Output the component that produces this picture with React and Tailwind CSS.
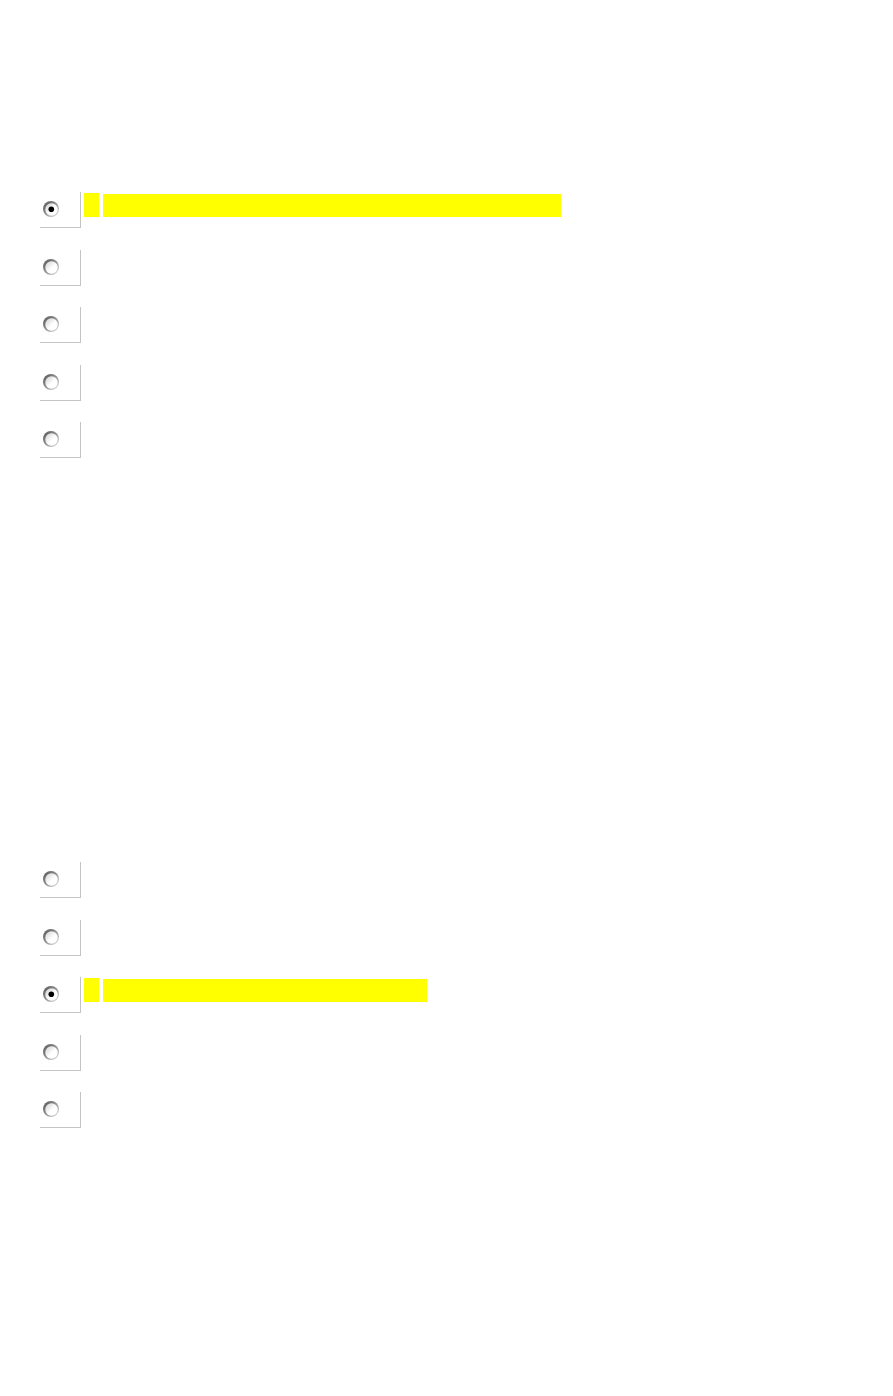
const groups = [
  { rows: [true, false, false, false, false], bar: 458 },
  { rows: [false, false, true, false, false], bar: 324 },
];

function Radio({ checked }) {
  return (
    <svg width="18" height="18" viewBox="0 0 18 18" className="block">
      <defs>
        <linearGradient id="ring" x1="0" y1="0" x2="1" y2="1">
          <stop offset="0" stopColor="#505050" />
          <stop offset="0.45" stopColor="#8c8c8c" />
          <stop offset="1" stopColor="#e6e6e6" />
        </linearGradient>
        <linearGradient id="inner" x1="0" y1="0" x2="1" y2="1">
          <stop offset="0" stopColor="#d0d0d0" />
          <stop offset="0.55" stopColor="#ffffff" />
        </linearGradient>
      </defs>
      <circle cx="9" cy="9" r="8" fill="url(#ring)" />
      <circle cx="9.5" cy="9.5" r="6.2" fill="url(#inner)" />
      {checked && <circle cx="9.3" cy="9.3" r="2.8" fill="#000" />}
    </svg>
  );
}

function Row({ checked, bar, last }) {
  return (
    <div className={`flex items-start ${last ? "" : "mb-[21.5px]"}`}>
      <div className="w-[41px] h-[36px] border-r border-b border-[#c4c4c4] pl-[2px] pt-[8px]">
        <Radio checked={checked} />
      </div>
      {checked && (
        <>
          <div className="ml-[3px] mt-[1px] w-[15px] h-[24px] bg-[#ffff00]" />
          <div className="ml-[4px] mt-[2px] h-[23px] bg-[#ffff00]" style={{ width: bar }} />
        </>
      )}
    </div>
  );
}

export default function App() {
  return (
    <div className="w-[893px] h-[1396px] bg-white pt-[192px] pl-[40px] font-['Liberation_Sans',sans-serif]">
      {groups.map((g, gi) => (
        <div key={gi} className={gi === 0 ? "mb-[404px]" : ""}>
          {g.rows.map((c, i) => (
            <Row key={i} checked={c} bar={g.bar} last={i === g.rows.length - 1} />
          ))}
        </div>
      ))}
    </div>
  );
}
